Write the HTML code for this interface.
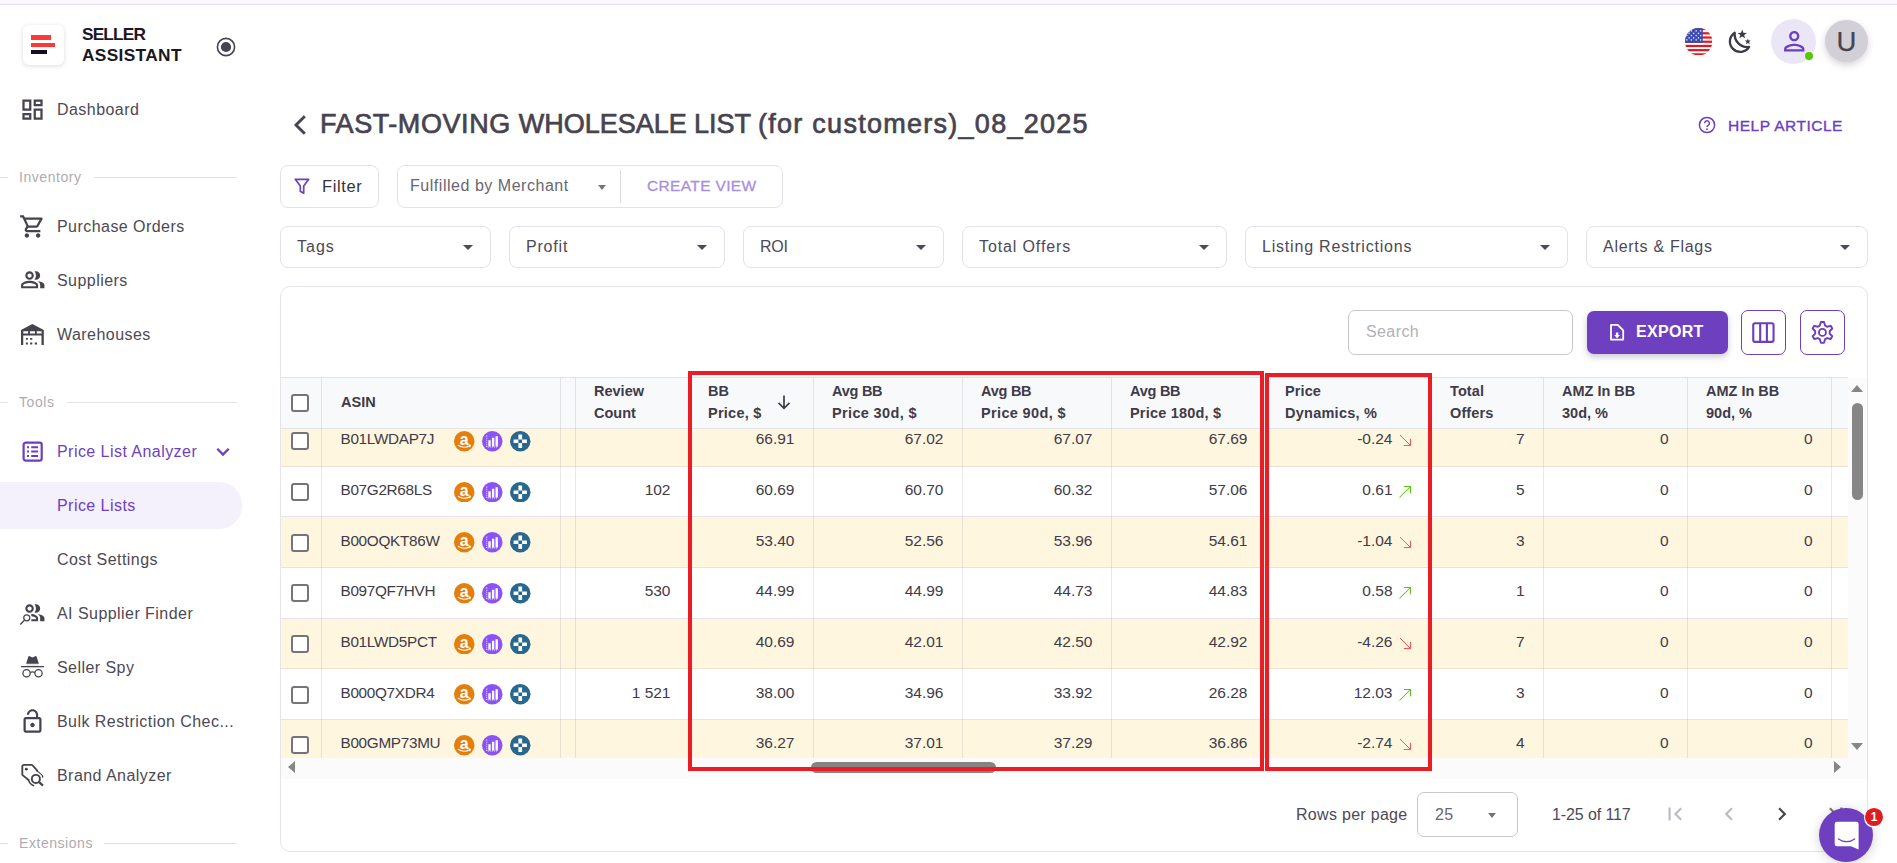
<!DOCTYPE html>
<html>
<head>
<meta charset="utf-8">
<style>
*{box-sizing:border-box;margin:0;padding:0}
html,body{width:1897px;height:863px;overflow:hidden;background:#fff}
body{font-family:"Liberation Sans",sans-serif;color:#4a4653;position:relative}
.abs{position:absolute}
.topstrip{left:0;top:0;width:1897px;height:5px;background:#fdf5fe;border-bottom:1px solid #e9dfee}
/* sidebar */
.nav{position:absolute;left:57px;font-size:16px;color:#4d4955;letter-spacing:.45px;white-space:nowrap;line-height:20px}
.nav.p{color:#6d3fc0}
.sec{position:absolute;font-size:14px;color:#aeabb3;letter-spacing:.55px;line-height:16px}
.secline{position:absolute;height:1px;background:#e3e1e6}
.ico{position:absolute;left:20px;width:24px;height:24px}
.pill{left:0;top:482px;width:242px;height:47px;background:#f4f0fc;border-radius:0 23px 23px 0}
/* main */
.title{left:320px;top:107px;font-size:27px;font-weight:normal;color:#47434f;-webkit-text-stroke:.7px #47434f;line-height:34px;white-space:nowrap}
.box{position:absolute;border:1px solid #e4e2e8;border-radius:8px;background:#fff}
.sel{position:absolute;top:226px;height:42px;border:1px solid #e4e2e8;border-radius:8px;font-size:16px;line-height:40px;padding-left:16px;color:#4d4955;letter-spacing:.45px}
.sel:after{content:"";position:absolute;right:17px;top:18px;border:5px solid transparent;border-top:5px solid #4d4955;border-bottom:0}
/* table */
.card{left:280px;top:286px;width:1588px;height:566px;border:1px solid #e6e4ea;border-radius:10px;background:#fff}
.thead{left:281px;top:377px;width:1567px;height:52px;background:#f8f9fb;border-top:1px solid #e4e3e8;border-bottom:1px solid #e4e3e8}
.row{position:absolute;left:281px;width:1567px;border-bottom:1px solid #e6e4e8}
.row.y{background:#fff6e0;border-bottom-color:#eee3cf}
.vl{position:absolute;top:378px;width:1px;height:380px;background:rgba(120,110,130,.16)}
.th{position:absolute;font-size:14.5px;font-weight:bold;color:#3f3b48;line-height:22px;white-space:nowrap}
.td{position:absolute;font-size:15.500px;color:#3f3b48;line-height:20px;white-space:nowrap;text-align:right}
.asin{position:absolute;left:340.500px;font-size:15.300px;color:#3f3b48;line-height:20px;white-space:nowrap;letter-spacing:-.3px}
.cb{position:absolute;left:291px;width:18px;height:18px;border:2px solid #76737b;border-radius:3px;background:#fff}
.red{position:absolute;border:4.800px solid #ec1c24}
</style>
</head>
<body>
<div class="abs topstrip"></div>

<!-- SIDEBAR -->
<div id="sidebar">
<div class="abs" style="left:23px;top:25px;width:41px;height:40px;border-radius:6px;background:#fff;box-shadow:0 1px 4px rgba(60,50,80,.18)"></div>
<div class="abs" style="left:31px;top:35.400px;width:20px;height:4.500px;background:#fd3836"></div>
<div class="abs" style="left:31px;top:42.600px;width:24.400px;height:4.500px;background:#fd3836"></div>
<div class="abs" style="left:31px;top:49.900px;width:15.900px;height:4.500px;background:#140e20"></div>
<div class="abs" style="left:82px;top:24px;font-size:17.300px;font-weight:bold;color:#1b1626;line-height:21px;white-space:nowrap"><span style="letter-spacing:-.85px">SELLER</span><br><span style="letter-spacing:.35px">ASSISTANT</span></div>
<svg class="abs" style="left:216.300px;top:37.200px" width="20" height="20" viewBox="0 0 20 20"><circle cx="10" cy="10" r="8.600" fill="none" stroke="#47434f" stroke-width="1.600"/><circle cx="10" cy="10" r="5.100" fill="#47434f"/></svg>
<svg class="abs" style="left:19px;top:96.10px" width="27" height="27" viewBox="0 0 24 24"><path fill="#46424e" d="M19 5v2h-4V5h4M9 5v6H5V5h4m10 8v6h-4v-6h4M9 17v2H5v-2h4M21 3h-8v6h8V3zM11 3H3v10h8V3zm10 8h-8v10h8V11zm-10 4H3v6h8v-6z"/></svg>
<div class="nav" style="top:100.1px">Dashboard</div>
<div class="secline" style="left:0;top:177px;width:8px"></div>
<div class="sec" style="left:19px;top:169px">Inventory</div>
<div class="secline" style="left:94px;top:177px;width:143px"></div>
<svg class="abs" style="left:19px;top:213.00px" width="27" height="27" viewBox="0 0 24 24"><path fill="#46424e" d="M15.550 13c.750 0 1.410-.410 1.750-1.030l3.580-6.490A.996.996 0 0 0 20.010 4H5.210l-.940-2H1v2h2l3.600 7.590-1.350 2.440C4.520 15.370 5.480 17 7 17h12v-2H7l1.100-2h7.450zM6.160 6h12.150l-2.760 5H8.530L6.160 6zM7 18c-1.100 0-1.990.900-1.990 2S5.900 22 7 22s2-.900 2-2-.900-2-2-2zm10 0c-1.100 0-1.990.900-1.990 2s.890 2 1.990 2 2-.900 2-2-.900-2-2-2z"/></svg>
<div class="nav" style="top:217.0px">Purchase Orders</div>
<svg class="abs" style="left:19.8px;top:267.25px" width="25.5" height="25.5" viewBox="0 0 24 24"><path fill="#46424e" d="M16.67 13.130C18.040 14.060 19 15.320 19 17v3h4v-3c0-2.180-3.570-3.470-6.330-3.870zM15 12c2.210 0 4-1.790 4-4s-1.790-4-4-4c-.470 0-.910.100-1.330.240C14.500 5.270 15 6.580 15 8s-.500 2.730-1.330 3.760c.420.140.860.240 1.330.240zM9 12c2.210 0 4-1.790 4-4s-1.790-4-4-4-4 1.790-4 4 1.790 4 4 4zm0-6c1.100 0 2 .900 2 2s-.900 2-2 2-2-.900-2-2 .900-2 2-2zm0 7c-2.670 0-8 1.340-8 4v3h16v-3c0-2.660-5.330-4-8-4zm6 5H3v-.990C3.200 16.290 6.300 15 9 15s5.800 1.290 6 2v1z"/></svg>
<div class="nav" style="top:271.0px">Suppliers</div>
<svg class="abs" style="left:21px;top:324px" width="24" height="22" viewBox="0 0 24 22"><path fill="#46424e" d="M11.400 0L22.800 6.100V20.900H20.500V11.560H2.230V20.900H0V6.100z"/><path fill="#fff" d="M2.300 7.200h4.800v2.300H2.300zM8.950 7.200h5.050v2.300H8.950zM15.800 7.200h4.800v2.300h-4.800z"/><path fill="#46424e" d="M4.900 14h2v1.700h-2zM9.100 14h2.200v1.700H9.100zM4.900 18.600h2v1.900h-2zM9.100 18.600h2.200v1.900H9.100zM13.800 18.600h2.200v1.900h-2.200z"/></svg>
<div class="nav" style="top:325.0px">Warehouses</div>
<div class="secline" style="left:0;top:402px;width:8px"></div>
<div class="sec" style="left:19px;top:394px">Tools</div>
<div class="secline" style="left:67px;top:402px;width:170px"></div>
<svg class="abs" style="left:19px;top:438px" width="27" height="27" viewBox="0 0 27 27"><rect x="4.600" y="4.600" width="18.100" height="18.100" rx="2.200" fill="none" stroke="#6b3fc0" stroke-width="2.200"/><path fill="#6b3fc0" d="M8 8.200h2v2H8zM8 12.600h2v2H8zM8 17h2v2H8zM12.200 8.200h6.900v2h-6.900zM12.200 12.600h6.900v2h-6.900zM12.200 17h6.900v2h-6.900z"/></svg>
<div class="nav p" style="top:442.0px">Price List Analyzer</div>
<svg class="abs" style="left:215px;top:444px" width="16" height="16" viewBox="0 0 16 16"><path d="M2.300 4.800l5.700 5.700 5.700-5.700" fill="none" stroke="#6b3fc0" stroke-width="2.300"/></svg>
<div class="abs pill"></div>
<div class="nav p" style="top:496.0px">Price Lists</div>
<div class="nav" style="top:550.0px">Cost Settings</div>
<svg class="abs" style="left:19.8px;top:600.25px;overflow:visible" width="25.5" height="25.5" viewBox="0 0 24 24"><path fill="#46424e" d="M16.67 13.130C18.040 14.060 19 15.320 19 17v3h4v-3c0-2.180-3.570-3.470-6.330-3.870zM15 12c2.210 0 4-1.790 4-4s-1.790-4-4-4c-.470 0-.910.100-1.330.240C14.500 5.270 15 6.580 15 8s-.500 2.730-1.330 3.760c.420.140.860.240 1.330.240zM9 12c2.210 0 4-1.790 4-4s-1.790-4-4-4-4 1.790-4 4 1.790 4 4 4zm0-6c1.100 0 2 .900 2 2s-.900 2-2 2-2-.900-2-2 .900-2 2-2zm0 7c-2.670 0-8 1.340-8 4v3h16v-3c0-2.660-5.330-4-8-4zm6 5H3v-.990C3.200 16.290 6.300 15 9 15s5.800 1.290 6 2v1z"/><rect x="0" y="12.400" width="10.600" height="9" fill="#fff"/><circle cx="6.36" cy="16.80" r="4.300" fill="#fff"/><path d="M3.86 19.25L0.28 23.11" stroke="#fff" stroke-width="3.500"/><circle cx="6.36" cy="16.80" r="2.850" fill="#fff" stroke="#46424e" stroke-width="1.150"/><path d="M3.86 19.25L0.28 23.11" stroke="#46424e" stroke-width="1.250"/></svg>
<div class="nav" style="top:604.0px">AI Supplier Finder</div>
<svg class="abs" style="left:19px;top:654px" width="27" height="26" viewBox="0 0 27 26"><path fill="#46424e" d="M7.150 9.800L9.200 3Q9.600 1.800 10.700 2.200L13.450 3.400L16.200 2.200Q17.300 1.800 17.700 3L19.900 9.800z"/><rect x="7.500" y="10" width="12" height="2" fill="#e9e8eb"/><rect x="2.100" y="12" width="22.800" height="1.300" fill="#46424e"/><circle cx="7.560" cy="19.300" r="3.650" fill="none" stroke="#46424e" stroke-width="1.250"/><circle cx="19.500" cy="19.300" r="3.650" fill="none" stroke="#46424e" stroke-width="1.250"/><path d="M11 18.300Q13.500 17.300 16 18.300" fill="none" stroke="#46424e" stroke-width="1.250"/></svg>
<div class="nav" style="top:658.0px">Seller Spy</div>
<svg class="abs" style="left:19px;top:708.00px" width="27" height="27" viewBox="0 0 24 24"><path fill="#46424e" d="M12 17c1.100 0 2-.900 2-2s-.900-2-2-2-2 .900-2 2 .900 2 2 2zm6-9h-1V6c0-2.760-2.240-5-5-5S7 3.240 7 6h1.900c0-1.710 1.390-3.100 3.100-3.100 1.710 0 3.100 1.390 3.100 3.100v2H6c-1.100 0-2 .900-2 2v10c0 1.100.900 2 2 2h12c1.100 0 2-.900 2-2V10c0-1.100-.900-2-2-2zm0 12H6V10h12v10z"/></svg>
<div class="nav" style="top:712.0px">Bulk Restriction Chec...</div>
<svg class="abs" style="left:19px;top:762px" width="27" height="27" viewBox="0 0 27 27"><path fill="none" stroke="#46424e" stroke-width="1.850" stroke-linecap="round" stroke-linejoin="round" d="M18.200 8.700L13.700 3.500Q13.200 2.900 12.500 2.900H5.100Q3.300 2.900 3.300 4.700V12.200Q3.300 12.900 3.900 13.400L9.600 18"/><path fill="#46424e" d="M17.400 7.900Q21.500 10.200 23.900 13.200Q24.800 14.500 24.200 15.800L22.900 15.400Q23.300 14.400 22.600 13.600Q20.500 11 17.300 9.300zM10.200 17.300Q10.400 19.600 11.900 21Q13.300 22.400 15.300 23L14.900 24.400Q12.400 23.800 10.800 22.100Q9 20.300 8.700 17.500z"/><circle cx="7.350" cy="7.170" r="1.450" fill="#46424e"/><circle cx="16.880" cy="16.900" r="4.050" fill="none" stroke="#46424e" stroke-width="1.900"/><path d="M20.100 20.100L24 23.600" stroke="#46424e" stroke-width="2.100" fill="none"/></svg>
<div class="nav" style="top:766.0px">Brand Analyzer</div>
<div class="secline" style="left:0;top:843px;width:8px"></div>
<div class="sec" style="left:19px;top:835px">Extensions</div>
<div class="secline" style="left:104px;top:843px;width:133px"></div>
</div>

<!-- MAIN -->
<div id="main">
  <!-- top right -->
  <svg class="abs" style="left:1684.900px;top:27.750px" width="27.400" height="27.400" viewBox="0 0 27.400 27.400"><defs><clipPath id="fc"><circle cx="13.700" cy="13.700" r="13.700"/></clipPath></defs><g clip-path="url(#fc)"><rect width="28" height="28" fill="#fff"/><g fill="#e5161f"><rect y="0.00" width="28" height="2.200"/><rect y="4.21" width="28" height="2.200"/><rect y="8.43" width="28" height="2.200"/><rect y="12.64" width="28" height="2.200"/><rect y="16.86" width="28" height="2.200"/><rect y="21.07" width="28" height="2.200"/><rect y="25.29" width="28" height="2.200"/></g><rect width="17.800" height="14.900" fill="#3b4cb0"/><g fill="#d6dbf2"><circle cx="1.9" cy="2.9" r=".800"/><circle cx="6.4" cy="2.9" r=".800"/><circle cx="11.15" cy="2.9" r=".800"/><circle cx="15.6" cy="2.9" r=".800"/><circle cx="4.1" cy="5.4" r=".800"/><circle cx="8.6" cy="5.4" r=".800"/><circle cx="13.4" cy="5.4" r=".800"/><circle cx="1.9" cy="7.6" r=".800"/><circle cx="6.4" cy="7.6" r=".800"/><circle cx="11.15" cy="7.6" r=".800"/><circle cx="15.6" cy="7.6" r=".800"/><circle cx="4.1" cy="9.9" r=".800"/><circle cx="8.6" cy="9.9" r=".800"/><circle cx="13.4" cy="9.9" r=".800"/><circle cx="1.9" cy="11.9" r=".800"/><circle cx="6.4" cy="11.9" r=".800"/><circle cx="11.15" cy="11.9" r=".800"/><circle cx="15.6" cy="11.9" r=".800"/></g></g></svg>
  <svg class="abs" style="left:1727px;top:27px" width="26" height="28" viewBox="0 0 26 28"><path d="M7.710 5.730A10.400 10.400 0 1 0 22.160 19.950A12.750 12.750 0 0 1 7.710 5.730z" fill="none" stroke="#3d3947" stroke-width="2.300" stroke-linejoin="round"/><path fill="#3d3947" d="M15.24 2.50L16.42 5.78L19.90 5.89L17.14 8.02L18.12 11.36L15.24 9.40L12.36 11.36L13.34 8.02L10.58 5.89L14.06 5.78zM20.80 11.40L21.56 13.55L23.84 13.61L22.04 15.00L22.68 17.19L20.80 15.90L18.92 17.19L19.56 15.00L17.76 13.61L20.04 13.55z"/></svg>
  <div class="abs" style="left:1771px;top:19px;width:45px;height:45px;border-radius:50%;background:#ebe6f6"></div>
  <svg class="abs" style="left:1778.850px;top:25.700px" width="30.500" height="30.500" viewBox="0 0 24 24"><path fill="#6b3fc0" d="M12 5.800c1.210 0 2.200.990 2.200 2.200s-.990 2.200-2.200 2.200S9.800 9.210 9.800 8s.990-2.200 2.200-2.200m0 9.900c2.700 0 5.800 1.290 6.200 2.300v.300H5.800V18c.430-1.020 3.510-2.300 6.200-2.300M12 4C9.790 4 8 5.790 8 8s1.790 4 4 4 4-1.790 4-4-1.790-4-4-4zm0 10c-2.670 0-8 1.340-8 4v2h16v-2c0-2.660-5.330-4-8-4z"/></svg>
  <div class="abs" style="left:1804.900px;top:51.800px;width:8.400px;height:8.400px;border-radius:50%;background:#56ca00"></div>
  <div class="abs" style="left:1825px;top:19.700px;width:43px;height:42.500px;border-radius:50%;background:#d2cfd6;box-shadow:0 3px 7px rgba(60,50,80,.22);text-align:center;font-size:27.500px;line-height:43px;color:#48444f;-webkit-text-stroke:.25px #48444f">U</div>

  <!-- title -->
  <svg class="abs" style="left:291px;top:112px" width="18" height="26" viewBox="0 0 18 26"><path d="M13.800 4.200L5 13l8.800 8.800" fill="none" stroke="#47434f" stroke-width="2.900"/></svg>
  <div class="abs title"><span style="letter-spacing:.57px">FAST-MOVING </span><span style="letter-spacing:-.03px">WHOLESALE LIST </span><span style="letter-spacing:1.27px">(for customers)_08_2025</span></div>

  <!-- help article -->
  <svg class="abs" style="left:1698px;top:116px" width="18" height="18" viewBox="0 0 18 18"><circle cx="9" cy="9" r="7.600" fill="none" stroke="#6d3fc0" stroke-width="1.500"/><path d="M6.600 7.200a2.400 2.400 0 1 1 3.600 2.100c-.8.500-1.200.9-1.200 1.800" fill="none" stroke="#6d3fc0" stroke-width="1.500"/><circle cx="9" cy="13.200" r=".95" fill="#6d3fc0"/></svg>
  <div class="abs" style="left:1728px;top:115.500px;font-size:15.500px;color:#6b3fc0;line-height:20px;letter-spacing:.5px;white-space:nowrap;-webkit-text-stroke:.35px #6b3fc0">HELP ARTICLE</div>

  <!-- filter button -->
  <div class="box" style="left:280px;top:165px;width:99px;height:43px"></div>
  <svg class="abs" style="left:293px;top:177px" width="18" height="18" viewBox="0 0 18 18"><path d="M2.300 2.300h13.400l-5 6.600v7.300l-3.400-2V8.900z" fill="none" stroke="#6d3fc0" stroke-width="1.700" stroke-linejoin="round"/></svg>
  <div class="abs" style="left:322px;top:176px;font-size:16.500px;color:#35313f;line-height:20px;letter-spacing:.6px">Filter</div>

  <!-- view select -->
  <div class="box" style="left:397px;top:165px;width:386px;height:43px"></div>
  <div class="abs" style="left:410px;top:176px;font-size:16px;color:#6a6672;line-height:20px;letter-spacing:.53px;white-space:nowrap">Fulfilled by Merchant</div>
  <div class="abs" style="left:598.200px;top:184.500px;border:4.800px solid transparent;border-top:5px solid #77737e;border-bottom:0"></div>
  <div class="abs" style="left:620px;top:170px;width:1px;height:33px;background:#dcdae0"></div>
  <div class="abs" style="left:647px;top:176px;font-size:15.500px;color:#a88fdc;line-height:20px;letter-spacing:.35px;white-space:nowrap;-webkit-text-stroke:.3px #a88fdc">CREATE VIEW</div>

  <!-- select row -->
  <div class="sel" style="left:280px;width:211px;letter-spacing:1.0px">Tags</div>
  <div class="sel" style="left:509px;width:216px;letter-spacing:0.8px">Profit</div>
  <div class="sel" style="left:743px;width:201px;letter-spacing:-0.25px">ROI</div>
  <div class="sel" style="left:962px;width:265px;letter-spacing:0.88px">Total Offers</div>
  <div class="sel" style="left:1245px;width:323px;letter-spacing:0.8px">Listing Restrictions</div>
  <div class="sel" style="left:1586px;width:282px;letter-spacing:0.72px">Alerts &amp; Flags</div>

  <!--TABLE-START-->
<div id="tablecard">
<div class="abs card"></div>
<div class="abs" style="left:1348px;top:310px;width:225px;height:45px;border:1px solid #c9c6ce;border-radius:7px;background:#fff"></div>
<div class="abs" style="left:1366px;top:322px;font-size:16px;color:#b3b0b8;line-height:20px;letter-spacing:.4px">Search</div>
<div class="abs" style="left:1587px;top:311px;width:141px;height:43px;border-radius:7px;background:#6e40c0;box-shadow:0 3px 6px rgba(70,60,90,.28)"></div>
<svg class="abs" style="left:1607px;top:322px" width="20" height="20" viewBox="0 0 20 20"><path d="M4 2.900h6.700l5.500 5.500v9.200H4z" fill="none" stroke="#fff" stroke-width="1.800" stroke-linejoin="round"/><path fill="#fff" d="M8.900 10.500h2.400v2.600h1.700l-2.900 3.100-2.900-3.100h1.700z"/></svg>
<div class="abs" style="left:1636px;top:322px;font-size:16px;font-weight:bold;color:#fff;line-height:20px;letter-spacing:.3px">EXPORT</div>
<div class="abs" style="left:1741px;top:310px;width:45px;height:45px;border:1px solid #6e40c0;border-radius:7px;background:#fff"></div>
<svg class="abs" style="left:1741px;top:310px" width="45" height="45" viewBox="0 0 45 45"><rect x="12.250" y="13.250" width="20.300" height="18.600" rx="1.800" fill="none" stroke="#6b3fc0" stroke-width="2.100"/><path d="M19.200 13.250v18.600M25.900 13.250v18.600" stroke="#6b3fc0" stroke-width="2.100"/></svg>
<div class="abs" style="left:1800px;top:310px;width:45px;height:45px;border:1px solid #6e40c0;border-radius:7px;background:#fff"></div>
<svg class="abs" style="left:1800px;top:310px" width="45" height="45" viewBox="0 0 45 45"><path fill="none" stroke="#6b3fc0" stroke-width="1.900" stroke-linejoin="round" d="M25.07 15.58L24.01 11.97L20.89 11.97L19.83 15.58L18.80 16.08L17.86 16.73L14.19 15.83L12.63 18.53L15.24 21.26L15.15 22.40L15.24 23.54L12.63 26.27L14.19 28.97L17.86 28.07L18.80 28.72L19.83 29.22L20.89 32.83L24.01 32.83L25.07 29.22L26.10 28.72L27.04 28.07L30.71 28.97L32.27 26.27L29.66 23.54L29.75 22.40L29.66 21.26L32.27 18.53L30.71 15.83L27.04 16.73L26.10 16.08z"/><circle cx="22.450" cy="22.400" r="3.500" fill="none" stroke="#6b3fc0" stroke-width="1.900"/></svg>
<div class="row y" style="top:428.0px;height:39.0px"></div>
<div class="row" style="top:467.0px;height:50.0px"></div>
<div class="row y" style="top:517.0px;height:51.0px"></div>
<div class="row" style="top:568.0px;height:51.0px"></div>
<div class="row y" style="top:619.0px;height:50.0px"></div>
<div class="row" style="top:669.0px;height:51.0px"></div>
<div class="row y" style="top:720.0px;height:37.9px;border-bottom:0"></div>
<div class="abs thead"></div>
<div class="vl" style="left:321px"></div>
<div class="vl" style="left:560px"></div>
<div class="vl" style="left:575px"></div>
<div class="vl" style="left:689px"></div>
<div class="vl" style="left:813px"></div>
<div class="vl" style="left:962px"></div>
<div class="vl" style="left:1111px"></div>
<div class="vl" style="left:1264px"></div>
<div class="vl" style="left:1431px"></div>
<div class="vl" style="left:1543px"></div>
<div class="vl" style="left:1687px"></div>
<div class="vl" style="left:1831px"></div>
<div class="th" style="left:341px;top:391px;letter-spacing:0px">ASIN</div>
<div class="th" style="left:594px;top:380px;letter-spacing:0px">Review</div>
<div class="th" style="left:594px;top:402px;letter-spacing:0px">Count</div>
<div class="th" style="left:708px;top:380px;letter-spacing:0px">BB</div>
<div class="th" style="left:708px;top:402px;letter-spacing:0.25px">Price, $</div>
<div class="th" style="left:832px;top:380px;letter-spacing:-0.25px">Avg BB</div>
<div class="th" style="left:832px;top:402px;letter-spacing:0.35px">Price 30d, $</div>
<div class="th" style="left:981px;top:380px;letter-spacing:-0.25px">Avg BB</div>
<div class="th" style="left:981px;top:402px;letter-spacing:0.35px">Price 90d, $</div>
<div class="th" style="left:1130px;top:380px;letter-spacing:-0.25px">Avg BB</div>
<div class="th" style="left:1130px;top:402px;letter-spacing:0.2px">Price 180d, $</div>
<div class="th" style="left:1285px;top:380px;letter-spacing:0.1px">Price</div>
<div class="th" style="left:1285px;top:402px;letter-spacing:0.25px">Dynamics, %</div>
<div class="th" style="left:1450px;top:380px;letter-spacing:0.1px">Total</div>
<div class="th" style="left:1450px;top:402px;letter-spacing:0.1px">Offers</div>
<div class="th" style="left:1562px;top:380px;letter-spacing:0px">AMZ In BB</div>
<div class="th" style="left:1562px;top:402px;letter-spacing:0px">30d, %</div>
<div class="th" style="left:1706px;top:380px;letter-spacing:0px">AMZ In BB</div>
<div class="th" style="left:1706px;top:402px;letter-spacing:0px">90d, %</div>
<svg class="abs" style="left:775px;top:393px" width="18" height="18" viewBox="0 0 18 18"><path d="M9 2.500v12.500M3.500 9.800L9 15.300l5.500-5.500" fill="none" stroke="#3f3b48" stroke-width="1.700"/></svg>
<div class="cb" style="top:394px"></div>
<div class="cb" style="top:432.2px"></div>
<div class="asin" style="top:429.2px">B01LWDAP7J</div>
<svg class="abs" style="left:454.1px;top:431.1px" width="20.500" height="20.500" viewBox="0 0 20 20"><circle cx="10" cy="10" r="10" fill="#e47f0b"/><text x="10" y="13.300" font-family="Liberation Sans" font-weight="bold" font-size="15.500" fill="#fff" text-anchor="middle">a</text><path d="M3.800 13.800c3.800 2.600 8.200 2.700 12 .4M14.300 13.300l1.700.7-.6 1.700" fill="none" stroke="#fff" stroke-width="1"/></svg>
<svg class="abs" style="left:482.1px;top:431.1px" width="20.500" height="20.500" viewBox="0 0 20 20"><circle cx="10" cy="10" r="10" fill="#8b52f5"/><path d="M4.600 4.500v11h11" fill="none" stroke="#e9dcff" stroke-width="1" stroke-dasharray="1 1"/><path fill="#fff" d="M6.200 9h2.300v6H6.200zM9.700 6.500h2.300V15H9.700zM13.200 5h2.300v10h-2.300z"/></svg>
<svg class="abs" style="left:510.1px;top:431.1px" width="20.500" height="20.500" viewBox="0 0 20 20"><circle cx="10" cy="10" r="10" fill="#28688f"/><path fill="#fff" d="M8.200 3.500h3.600v4.700H8.200zM8.200 11.800h3.600v4.700H8.200zM3.500 8.200h4.700v3.600H3.500zM11.800 8.200h4.700v3.600h-4.700z"/></svg>
<div class="td" style="left:674.5px;width:120px;top:429.2px">66.91</div>
<div class="td" style="left:823.5px;width:120px;top:429.2px">67.02</div>
<div class="td" style="left:972.5px;width:120px;top:429.2px">67.07</div>
<div class="td" style="left:1127.5px;width:120px;top:429.2px">67.69</div>
<div class="td" style="left:1272.5px;width:120px;top:429.2px">-0.24</div>
<svg class="abs" style="left:1398px;top:433.2px" width="14" height="14" viewBox="0 0 14 14"><path d="M2 2l10.500 10.500M5.800 12.500h6.700V5.800" fill="none" stroke="#fc5555" stroke-width="1"/></svg>
<div class="td" style="left:1404.5px;width:120px;top:429.2px">7</div>
<div class="td" style="left:1548.5px;width:120px;top:429.2px">0</div>
<div class="td" style="left:1692.5px;width:120px;top:429.2px">0</div>
<div class="cb" style="top:482.8px"></div>
<div class="asin" style="top:479.8px">B07G2R68LS</div>
<svg class="abs" style="left:454.1px;top:481.7px" width="20.500" height="20.500" viewBox="0 0 20 20"><circle cx="10" cy="10" r="10" fill="#e47f0b"/><text x="10" y="13.300" font-family="Liberation Sans" font-weight="bold" font-size="15.500" fill="#fff" text-anchor="middle">a</text><path d="M3.800 13.800c3.800 2.600 8.200 2.700 12 .4M14.300 13.300l1.700.7-.6 1.700" fill="none" stroke="#fff" stroke-width="1"/></svg>
<svg class="abs" style="left:482.1px;top:481.7px" width="20.500" height="20.500" viewBox="0 0 20 20"><circle cx="10" cy="10" r="10" fill="#8b52f5"/><path d="M4.600 4.500v11h11" fill="none" stroke="#e9dcff" stroke-width="1" stroke-dasharray="1 1"/><path fill="#fff" d="M6.200 9h2.300v6H6.200zM9.700 6.500h2.300V15H9.700zM13.200 5h2.300v10h-2.300z"/></svg>
<svg class="abs" style="left:510.1px;top:481.7px" width="20.500" height="20.500" viewBox="0 0 20 20"><circle cx="10" cy="10" r="10" fill="#28688f"/><path fill="#fff" d="M8.200 3.500h3.600v4.700H8.200zM8.200 11.800h3.600v4.700H8.200zM3.500 8.200h4.700v3.600H3.500zM11.800 8.200h4.700v3.600h-4.700z"/></svg>
<div class="td" style="left:550.5px;width:120px;top:479.8px">102</div>
<div class="td" style="left:674.5px;width:120px;top:479.8px">60.69</div>
<div class="td" style="left:823.5px;width:120px;top:479.8px">60.70</div>
<div class="td" style="left:972.5px;width:120px;top:479.8px">60.32</div>
<div class="td" style="left:1127.5px;width:120px;top:479.8px">57.06</div>
<div class="td" style="left:1272.5px;width:120px;top:479.8px">0.61</div>
<svg class="abs" style="left:1398px;top:484.8px" width="14" height="14" viewBox="0 0 14 14"><path d="M1.500 12.500L12.500 1.500M5.800 1.500h6.700v6.700" fill="none" stroke="#5cc414" stroke-width="1.050"/></svg>
<div class="td" style="left:1404.5px;width:120px;top:479.8px">5</div>
<div class="td" style="left:1548.5px;width:120px;top:479.8px">0</div>
<div class="td" style="left:1692.5px;width:120px;top:479.8px">0</div>
<div class="cb" style="top:533.5px"></div>
<div class="asin" style="top:530.5px">B00OQKT86W</div>
<svg class="abs" style="left:454.1px;top:532.4px" width="20.500" height="20.500" viewBox="0 0 20 20"><circle cx="10" cy="10" r="10" fill="#e47f0b"/><text x="10" y="13.300" font-family="Liberation Sans" font-weight="bold" font-size="15.500" fill="#fff" text-anchor="middle">a</text><path d="M3.800 13.800c3.800 2.600 8.200 2.700 12 .4M14.300 13.300l1.700.7-.6 1.700" fill="none" stroke="#fff" stroke-width="1"/></svg>
<svg class="abs" style="left:482.1px;top:532.4px" width="20.500" height="20.500" viewBox="0 0 20 20"><circle cx="10" cy="10" r="10" fill="#8b52f5"/><path d="M4.600 4.500v11h11" fill="none" stroke="#e9dcff" stroke-width="1" stroke-dasharray="1 1"/><path fill="#fff" d="M6.200 9h2.300v6H6.200zM9.700 6.500h2.300V15H9.700zM13.200 5h2.300v10h-2.300z"/></svg>
<svg class="abs" style="left:510.1px;top:532.4px" width="20.500" height="20.500" viewBox="0 0 20 20"><circle cx="10" cy="10" r="10" fill="#28688f"/><path fill="#fff" d="M8.200 3.500h3.600v4.700H8.200zM8.200 11.800h3.600v4.700H8.200zM3.500 8.200h4.700v3.600H3.500zM11.800 8.200h4.700v3.600h-4.700z"/></svg>
<div class="td" style="left:674.5px;width:120px;top:530.5px">53.40</div>
<div class="td" style="left:823.5px;width:120px;top:530.5px">52.56</div>
<div class="td" style="left:972.5px;width:120px;top:530.5px">53.96</div>
<div class="td" style="left:1127.5px;width:120px;top:530.5px">54.61</div>
<div class="td" style="left:1272.5px;width:120px;top:530.5px">-1.04</div>
<svg class="abs" style="left:1398px;top:534.5px" width="14" height="14" viewBox="0 0 14 14"><path d="M2 2l10.500 10.500M5.800 12.500h6.700V5.800" fill="none" stroke="#fc5555" stroke-width="1"/></svg>
<div class="td" style="left:1404.5px;width:120px;top:530.5px">3</div>
<div class="td" style="left:1548.5px;width:120px;top:530.5px">0</div>
<div class="td" style="left:1692.5px;width:120px;top:530.5px">0</div>
<div class="cb" style="top:584.2px"></div>
<div class="asin" style="top:581.2px">B097QF7HVH</div>
<svg class="abs" style="left:454.1px;top:583.1px" width="20.500" height="20.500" viewBox="0 0 20 20"><circle cx="10" cy="10" r="10" fill="#e47f0b"/><text x="10" y="13.300" font-family="Liberation Sans" font-weight="bold" font-size="15.500" fill="#fff" text-anchor="middle">a</text><path d="M3.800 13.800c3.800 2.600 8.200 2.700 12 .4M14.300 13.300l1.700.7-.6 1.700" fill="none" stroke="#fff" stroke-width="1"/></svg>
<svg class="abs" style="left:482.1px;top:583.1px" width="20.500" height="20.500" viewBox="0 0 20 20"><circle cx="10" cy="10" r="10" fill="#8b52f5"/><path d="M4.600 4.500v11h11" fill="none" stroke="#e9dcff" stroke-width="1" stroke-dasharray="1 1"/><path fill="#fff" d="M6.200 9h2.300v6H6.200zM9.700 6.500h2.300V15H9.700zM13.200 5h2.300v10h-2.300z"/></svg>
<svg class="abs" style="left:510.1px;top:583.1px" width="20.500" height="20.500" viewBox="0 0 20 20"><circle cx="10" cy="10" r="10" fill="#28688f"/><path fill="#fff" d="M8.200 3.500h3.600v4.700H8.200zM8.200 11.800h3.600v4.700H8.200zM3.500 8.200h4.700v3.600H3.500zM11.800 8.200h4.700v3.600h-4.700z"/></svg>
<div class="td" style="left:550.5px;width:120px;top:581.2px">530</div>
<div class="td" style="left:674.5px;width:120px;top:581.2px">44.99</div>
<div class="td" style="left:823.5px;width:120px;top:581.2px">44.99</div>
<div class="td" style="left:972.5px;width:120px;top:581.2px">44.73</div>
<div class="td" style="left:1127.5px;width:120px;top:581.2px">44.83</div>
<div class="td" style="left:1272.5px;width:120px;top:581.2px">0.58</div>
<svg class="abs" style="left:1398px;top:586.2px" width="14" height="14" viewBox="0 0 14 14"><path d="M1.500 12.500L12.500 1.500M5.800 1.500h6.700v6.700" fill="none" stroke="#5cc414" stroke-width="1.050"/></svg>
<div class="td" style="left:1404.5px;width:120px;top:581.2px">1</div>
<div class="td" style="left:1548.5px;width:120px;top:581.2px">0</div>
<div class="td" style="left:1692.5px;width:120px;top:581.2px">0</div>
<div class="cb" style="top:634.8px"></div>
<div class="asin" style="top:631.8px">B01LWD5PCT</div>
<svg class="abs" style="left:454.1px;top:633.7px" width="20.500" height="20.500" viewBox="0 0 20 20"><circle cx="10" cy="10" r="10" fill="#e47f0b"/><text x="10" y="13.300" font-family="Liberation Sans" font-weight="bold" font-size="15.500" fill="#fff" text-anchor="middle">a</text><path d="M3.800 13.800c3.800 2.600 8.200 2.700 12 .4M14.300 13.300l1.700.7-.6 1.700" fill="none" stroke="#fff" stroke-width="1"/></svg>
<svg class="abs" style="left:482.1px;top:633.7px" width="20.500" height="20.500" viewBox="0 0 20 20"><circle cx="10" cy="10" r="10" fill="#8b52f5"/><path d="M4.600 4.500v11h11" fill="none" stroke="#e9dcff" stroke-width="1" stroke-dasharray="1 1"/><path fill="#fff" d="M6.200 9h2.300v6H6.200zM9.700 6.500h2.300V15H9.700zM13.200 5h2.300v10h-2.300z"/></svg>
<svg class="abs" style="left:510.1px;top:633.7px" width="20.500" height="20.500" viewBox="0 0 20 20"><circle cx="10" cy="10" r="10" fill="#28688f"/><path fill="#fff" d="M8.200 3.500h3.600v4.700H8.200zM8.200 11.800h3.600v4.700H8.200zM3.500 8.200h4.700v3.600H3.500zM11.800 8.200h4.700v3.600h-4.700z"/></svg>
<div class="td" style="left:674.5px;width:120px;top:631.8px">40.69</div>
<div class="td" style="left:823.5px;width:120px;top:631.8px">42.01</div>
<div class="td" style="left:972.5px;width:120px;top:631.8px">42.50</div>
<div class="td" style="left:1127.5px;width:120px;top:631.8px">42.92</div>
<div class="td" style="left:1272.5px;width:120px;top:631.8px">-4.26</div>
<svg class="abs" style="left:1398px;top:635.8px" width="14" height="14" viewBox="0 0 14 14"><path d="M2 2l10.500 10.500M5.800 12.500h6.700V5.800" fill="none" stroke="#fc5555" stroke-width="1"/></svg>
<div class="td" style="left:1404.5px;width:120px;top:631.8px">7</div>
<div class="td" style="left:1548.5px;width:120px;top:631.8px">0</div>
<div class="td" style="left:1692.5px;width:120px;top:631.8px">0</div>
<div class="cb" style="top:685.5px"></div>
<div class="asin" style="top:682.5px">B000Q7XDR4</div>
<svg class="abs" style="left:454.1px;top:684.4px" width="20.500" height="20.500" viewBox="0 0 20 20"><circle cx="10" cy="10" r="10" fill="#e47f0b"/><text x="10" y="13.300" font-family="Liberation Sans" font-weight="bold" font-size="15.500" fill="#fff" text-anchor="middle">a</text><path d="M3.800 13.800c3.800 2.600 8.200 2.700 12 .4M14.300 13.300l1.700.7-.6 1.700" fill="none" stroke="#fff" stroke-width="1"/></svg>
<svg class="abs" style="left:482.1px;top:684.4px" width="20.500" height="20.500" viewBox="0 0 20 20"><circle cx="10" cy="10" r="10" fill="#8b52f5"/><path d="M4.600 4.500v11h11" fill="none" stroke="#e9dcff" stroke-width="1" stroke-dasharray="1 1"/><path fill="#fff" d="M6.200 9h2.300v6H6.200zM9.700 6.500h2.300V15H9.700zM13.200 5h2.300v10h-2.300z"/></svg>
<svg class="abs" style="left:510.1px;top:684.4px" width="20.500" height="20.500" viewBox="0 0 20 20"><circle cx="10" cy="10" r="10" fill="#28688f"/><path fill="#fff" d="M8.200 3.500h3.600v4.700H8.200zM8.200 11.800h3.600v4.700H8.200zM3.500 8.200h4.700v3.600H3.500zM11.800 8.200h4.700v3.600h-4.700z"/></svg>
<div class="td" style="left:550.5px;width:120px;top:682.5px">1 521</div>
<div class="td" style="left:674.5px;width:120px;top:682.5px">38.00</div>
<div class="td" style="left:823.5px;width:120px;top:682.5px">34.96</div>
<div class="td" style="left:972.5px;width:120px;top:682.5px">33.92</div>
<div class="td" style="left:1127.5px;width:120px;top:682.5px">26.28</div>
<div class="td" style="left:1272.5px;width:120px;top:682.5px">12.03</div>
<svg class="abs" style="left:1398px;top:687.5px" width="14" height="14" viewBox="0 0 14 14"><path d="M1.500 12.500L12.500 1.500M5.800 1.500h6.700v6.700" fill="none" stroke="#5cc414" stroke-width="1.050"/></svg>
<div class="td" style="left:1404.5px;width:120px;top:682.5px">3</div>
<div class="td" style="left:1548.5px;width:120px;top:682.5px">0</div>
<div class="td" style="left:1692.5px;width:120px;top:682.5px">0</div>
<div class="cb" style="top:736.2px"></div>
<div class="asin" style="top:733.2px">B00GMP73MU</div>
<svg class="abs" style="left:454.1px;top:735.1px" width="20.500" height="20.500" viewBox="0 0 20 20"><circle cx="10" cy="10" r="10" fill="#e47f0b"/><text x="10" y="13.300" font-family="Liberation Sans" font-weight="bold" font-size="15.500" fill="#fff" text-anchor="middle">a</text><path d="M3.800 13.800c3.800 2.600 8.200 2.700 12 .4M14.300 13.300l1.700.7-.6 1.700" fill="none" stroke="#fff" stroke-width="1"/></svg>
<svg class="abs" style="left:482.1px;top:735.1px" width="20.500" height="20.500" viewBox="0 0 20 20"><circle cx="10" cy="10" r="10" fill="#8b52f5"/><path d="M4.600 4.500v11h11" fill="none" stroke="#e9dcff" stroke-width="1" stroke-dasharray="1 1"/><path fill="#fff" d="M6.200 9h2.300v6H6.200zM9.700 6.500h2.300V15H9.700zM13.200 5h2.300v10h-2.300z"/></svg>
<svg class="abs" style="left:510.1px;top:735.1px" width="20.500" height="20.500" viewBox="0 0 20 20"><circle cx="10" cy="10" r="10" fill="#28688f"/><path fill="#fff" d="M8.200 3.500h3.600v4.700H8.200zM8.200 11.800h3.600v4.700H8.200zM3.500 8.200h4.700v3.600H3.500zM11.800 8.200h4.700v3.600h-4.700z"/></svg>
<div class="td" style="left:674.5px;width:120px;top:733.2px">36.27</div>
<div class="td" style="left:823.5px;width:120px;top:733.2px">37.01</div>
<div class="td" style="left:972.5px;width:120px;top:733.2px">37.29</div>
<div class="td" style="left:1127.5px;width:120px;top:733.2px">36.86</div>
<div class="td" style="left:1272.5px;width:120px;top:733.2px">-2.74</div>
<svg class="abs" style="left:1398px;top:737.2px" width="14" height="14" viewBox="0 0 14 14"><path d="M2 2l10.500 10.500M5.800 12.500h6.700V5.800" fill="none" stroke="#fc5555" stroke-width="1"/></svg>
<div class="td" style="left:1404.5px;width:120px;top:733.2px">4</div>
<div class="td" style="left:1548.5px;width:120px;top:733.2px">0</div>
<div class="td" style="left:1692.5px;width:120px;top:733.2px">0</div>
<div class="abs" style="left:281px;top:757.900px;width:1586px;height:21px;background:#fbfbfb"></div>
<div class="abs" style="left:1848px;top:378px;width:19px;height:401px;background:#fbfbfb"></div>
<div class="abs" style="left:1852.200px;top:403px;width:10.500px;height:96.600px;border-radius:6px;background:#868686"></div>
<div class="abs" style="left:1850.900px;top:384.800px;border:6.650px solid transparent;border-bottom:7.400px solid #868686;border-top:0"></div>
<div class="abs" style="left:1850.900px;top:742.900px;border:6.550px solid transparent;border-top:7.200px solid #868686;border-bottom:0"></div>
<div class="abs" style="left:810.700px;top:761.800px;width:185.600px;height:11.300px;border-radius:6px;background:#848484"></div>
<div class="abs" style="left:288px;top:760.900px;border:6.650px solid transparent;border-right:7.100px solid #868686;border-left:0"></div>
<div class="abs" style="left:1834px;top:760.900px;border:6.650px solid transparent;border-left:7.100px solid #868686;border-right:0"></div>
<div class="red" style="left:688px;top:371.100px;width:575.900px;height:399.800px"></div>
<div class="red" style="left:1265.100px;top:373.100px;width:166.900px;height:397.800px"></div>
<div class="abs" style="left:1296px;top:805px;font-size:16px;color:#4d4955;line-height:20px;letter-spacing:.3px;white-space:nowrap">Rows per page</div>
<div class="abs" style="left:1417px;top:792px;width:100.500px;height:45px;border:1px solid #c9c6ce;border-radius:7px"></div>
<div class="abs" style="left:1435px;top:805px;font-size:16px;color:#6a6672;line-height:20px;letter-spacing:.3px">25</div>
<div class="abs" style="left:1488px;top:812.700px;border:4.800px solid transparent;border-top:5.200px solid #77737e;border-bottom:0"></div>
<div class="abs" style="left:1552px;top:805px;font-size:16px;color:#4d4955;line-height:20px;letter-spacing:-.1px;white-space:nowrap">1-25 of 117</div>
<svg class="abs" style="left:1662.200px;top:801.300px" width="26" height="26" viewBox="0 0 24 24"><path fill="#bebbc3" d="M18.410 16.590L13.820 12l4.590-4.590L17 6l-6 6 6 6zM6 6h2v12H6z"/></svg>
<svg class="abs" style="left:1715.500px;top:801.300px" width="26" height="26" viewBox="0 0 24 24"><path fill="#bebbc3" d="M15.410 7.410L14 6l-6 6 6 6 1.410-1.410L10.830 12z"/></svg>
<svg class="abs" style="left:1769.300px;top:801.300px" width="26" height="26" viewBox="0 0 24 24"><path fill="#4a4650" d="M10 6L8.590 7.410 13.170 12l-4.580 4.590L10 18l6-6z"/></svg>
<svg class="abs" style="left:1823.100px;top:801.300px" width="26" height="26" viewBox="0 0 24 24"><path fill="#77747c" d="M5.590 7.410L10.180 12l-4.590 4.590L7 18l6-6-6-6zM16 6h2v12h-2z"/></svg>
<div class="abs" style="left:1819.200px;top:808px;width:53.700px;height:54px;border-radius:50%;background:#6e40c0;box-shadow:0 2px 12px rgba(0,0,0,.18)"></div>
<svg class="abs" style="left:1832px;top:819px" width="30" height="32" viewBox="0 0 30 32"><path d="M5 2.800h19.300a2.300 2.300 0 0 1 2.300 2.300v25.300l-7.600-3.200h-14a2.300 2.300 0 0 1-2.300-2.300v-19.800a2.300 2.300 0 0 1 2.300-2.300z" fill="#fff"/><path d="M6.600 20c4.600 3.600 11.400 3.600 16 0" fill="none" stroke="#6e40c0" stroke-width="1.300" stroke-linecap="round"/></svg>
<div class="abs" style="left:1863.600px;top:806.500px;width:21px;height:21px;border-radius:50%;background:#fff"></div>
<div class="abs" style="left:1865.200px;top:808px;width:17.900px;height:17.900px;border-radius:50%;background:#de1c22;color:#fff;font-size:12px;font-weight:bold;text-align:center;line-height:18px">1</div>
</div>
<!--TABLE-END-->
</div>

</body>
</html>
